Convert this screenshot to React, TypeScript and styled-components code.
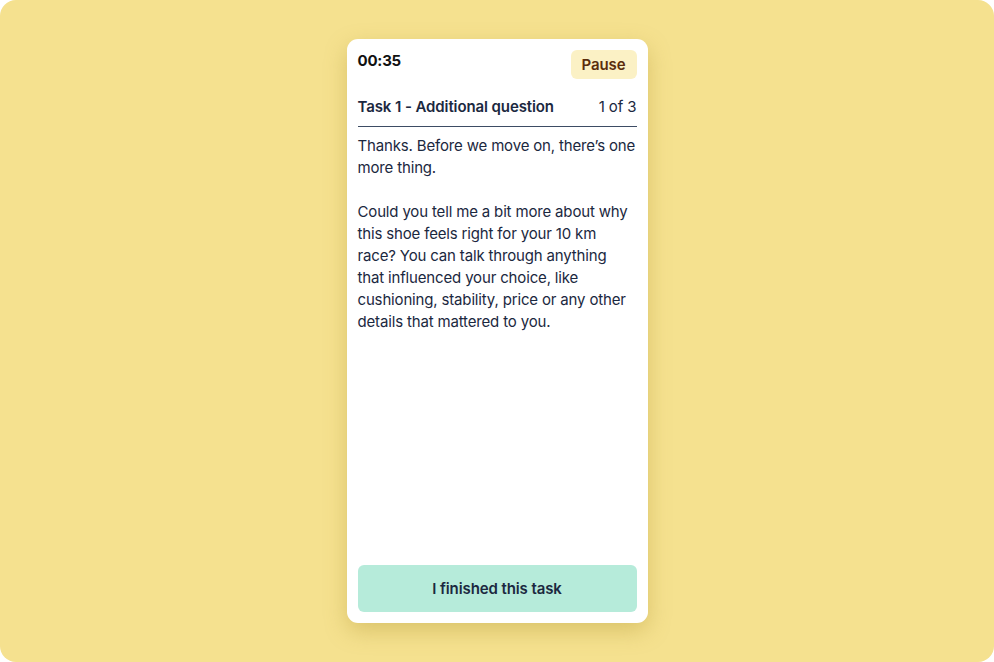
import React from "react";
import styled, { createGlobalStyle } from "styled-components";

const Global = createGlobalStyle`
  html, body { margin: 0; padding: 0; background: #ffffff; }
  body { font-family: Inter, "Noto Sans", sans-serif; -webkit-font-smoothing: antialiased; }
  * { box-sizing: border-box; }
`;

const Stage = styled.div`
  width: 994px;
  height: 662px;
  background: #f5e18f;
  border-radius: 16px;
  display: flex;
  align-items: center;
  justify-content: center;
`;

const Card = styled.div`
  width: 301px;
  height: 584px;
  background: #ffffff;
  border-radius: 11px;
  padding: 11px;
  display: flex;
  flex-direction: column;
  box-shadow: 0 8px 22px rgba(170, 140, 40, 0.35);
  color: #1b2840;
  letter-spacing: -0.1px;
`;

const TopBar = styled.div`
  display: flex;
  justify-content: space-between;
  align-items: flex-start;
`;

const Timer = styled.div`
  font-size: 15px;
  line-height: 22px;
  font-weight: 700;
  color: #111111;
  letter-spacing: -0.2px;
`;

const PauseButton = styled.button`
  height: 29px;
  padding: 0 11px;
  border: none;
  border-radius: 6px;
  background: #fbf1c5;
  color: #5a2d0c;
  font-family: inherit;
  font-size: 15px;
  font-weight: 600;
  letter-spacing: inherit;
  cursor: pointer;
`;

const TaskHeader = styled.div`
  margin-top: 17px;
  padding-bottom: 8px;
  border-bottom: 1.5px solid #3d4c64;
  display: flex;
  justify-content: space-between;
  align-items: center;
  font-size: 15px;
  line-height: 22px;
`;

const TaskTitle = styled.span`
  font-weight: 600;
`;

const TaskCount = styled.span`
  font-weight: 400;
`;

const Body = styled.div`
  flex: 1;
  padding-top: 8px;
  font-size: 15px;
  line-height: 22px;
  letter-spacing: -0.16px;
  p { margin: 0 0 22px; }
`;

const FinishButton = styled.button`
  height: 47px;
  width: 100%;
  border: none;
  border-radius: 6px;
  background: #b6ebda;
  color: #1b2840;
  font-family: inherit;
  font-size: 15px;
  font-weight: 600;
  letter-spacing: inherit;
  cursor: pointer;
`;

export default function App() {
  return (
    <>
      <Global />
      <Stage>
        <Card>
          <TopBar>
            <Timer>00:35</Timer>
            <PauseButton>Pause</PauseButton>
          </TopBar>
          <TaskHeader>
            <TaskTitle>Task 1 - Additional question</TaskTitle>
            <TaskCount>1 of 3</TaskCount>
          </TaskHeader>
          <Body>
            <p>Thanks. Before we move on, there’s one more thing.</p>
            <p>
              Could you tell me a bit more about why this shoe feels right for your 10 km race? You
              can talk through anything that influenced your choice, like cushioning, stability,
              price or any other details that mattered to you.
            </p>
          </Body>
          <FinishButton>I finished this task</FinishButton>
        </Card>
      </Stage>
    </>
  );
}
